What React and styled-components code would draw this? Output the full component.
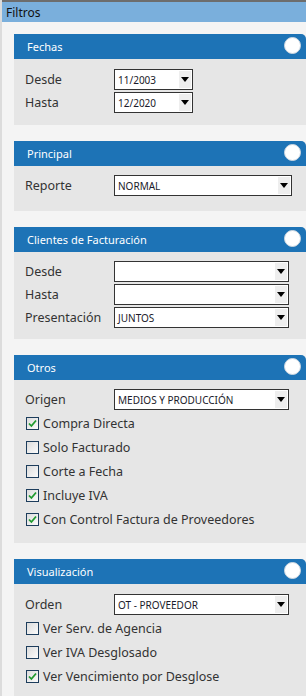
import React from "react";
import styled, { createGlobalStyle } from "styled-components";

const GlobalStyle = createGlobalStyle`
  html, body {
    margin: 0;
    padding: 0;
    background: #f4f4f4;
  }
  body {
    font-family: "Noto Sans", "Open Sans", sans-serif;
    overflow: hidden;
  }
`;

const Page = styled.div`
  width: 306px;
  height: 696px;
  overflow: hidden;
  background: #f4f4f4;
  border-left: 2px solid #dcdcdc;
  box-sizing: border-box;
`;

const TopBar = styled.div`
  height: 20px;
  border-top: 2px solid #6d6d6d;
  background: #7aafdc;
  display: flex;
  align-items: center;
  padding-left: 4px;
  font-family: "Noto Sans", sans-serif;
  font-size: 12px;
  color: #111;
`;

const Content = styled.div`
  display: flex;
  flex-direction: column;
  gap: 16px;
  padding: 12px 0 0 12px;
`;

const Panel = styled.div`
  width: 292px;
  background: #e6e6e6;
  border-top-right-radius: 5px;
`;

const PanelHeader = styled.div`
  height: 25px;
  background: #1d73b6;
  border-top-right-radius: 5px;
  display: flex;
  align-items: center;
  justify-content: space-between;
  padding: 0 5px 0 13px;
  color: #fff;
  font-size: 11px;
`;

const Toggle = styled.span`
  width: 15px;
  height: 15px;
  border-radius: 50%;
  background: #fff;
  border: 1px solid #cfd8e0;
  margin-top: -2px;
`;

const PanelBody = styled.div`
  display: flex;
  flex-direction: column;
  gap: 2px;
  padding: ${p => p.$pad || "10px 0 12px 11px"};
`;

const FieldRow = styled.div`
  display: flex;
  align-items: center;
  height: 21px;
`;

const Label = styled.div`
  width: 89px;
  font-size: 12.5px;
  color: #333;
`;

const Select = styled.div`
  width: ${p => p.$w}px;
  height: 21px;
  box-sizing: border-box;
  border: 1px solid #333;
  background: #fff;
  display: flex;
  align-items: center;
  justify-content: space-between;
  padding: 1px;
`;

const SelectText = styled.span`
  padding-left: 2px;
  font-family: "Noto Sans", sans-serif;
  font-size: 10px;
  color: #1a1a2a;
  white-space: nowrap;
`;

const Arrow = styled.span`
  width: 12px;
  align-self: stretch;
  background: #eeeeee;
  display: flex;
  align-items: center;
  justify-content: center;

  &::after {
    content: "";
    border-left: 4px solid transparent;
    border-right: 4px solid transparent;
    border-top: 5px solid #000;
  }
`;

const CheckRow = styled.label`
  display: flex;
  align-items: center;
  height: 24px;
  margin-top: ${p => (p.$first ? "-1px" : "-2px")};
  padding-left: 1px;
  gap: 4px;
  font-size: 12.5px;
  color: #333;
`;

const Box = styled.span`
  width: 13px;
  height: 13px;
  box-sizing: border-box;
  border: 1px solid #1d3d5c;
  background: linear-gradient(135deg, #dcdcdc, #fbfbfb);
  display: flex;
  align-items: center;
  justify-content: center;
`;

function Check({ on, children, first }) {
  return (
    <CheckRow $first={first}>
      <Box>
        {on && (
          <svg width="9" height="9" viewBox="0 0 9 9">
            <path d="M1 4.5 L3.4 7 L8 1.5" fill="none" stroke="#1f9a2e" strokeWidth="1.8" />
          </svg>
        )}
      </Box>
      {children}
    </CheckRow>
  );
}

function Field({ label, value, w }) {
  return (
    <FieldRow>
      <Label>{label}</Label>
      <Select $w={w}>
        <SelectText>{value}</SelectText>
        <Arrow />
      </Select>
    </FieldRow>
  );
}

function Section({ title, children, pad }) {
  return (
    <Panel>
      <PanelHeader>
        <span>{title}</span>
        <Toggle />
      </PanelHeader>
      <PanelBody $pad={pad}>{children}</PanelBody>
    </Panel>
  );
}

export default function App() {
  return (
    <Page>
      <GlobalStyle />
      <TopBar>Filtros</TopBar>
      <Content>
        <Section title="Fechas">
          <Field label="Desde" value="11/2003" w={79} />
          <Field label="Hasta" value="12/2020" w={79} />
        </Section>

        <Section title="Principal" pad="9px 0 15px 11px">
          <Field label="Reporte" value="NORMAL" w={178} />
        </Section>

        <Section title="Clientes de Facturación" pad="9px 0 11px 11px">
          <Field label="Desde" value="" w={175} />
          <Field label="Hasta" value="" w={175} />
          <Field label="Presentación" value="JUNTOS" w={175} />
        </Section>

        <Section title="Otros" pad="9px 0 12px 11px">
          <Field label="Origen" value="MEDIOS Y PRODUCCIÓN" w={175} />
          <Check on first>Compra Directa</Check>
          <Check>Solo Facturado</Check>
          <Check>Corte a Fecha</Check>
          <Check on>Incluye IVA</Check>
          <Check on>Con Control Factura de Proveedores</Check>
        </Section>

        <Section title="Visualización" pad="10px 0 20px 11px">
          <Field label="Orden" value="OT - PROVEEDOR" w={175} />
          <Check first>Ver Serv. de Agencia</Check>
          <Check>Ver IVA Desglosado</Check>
          <Check on>Ver Vencimiento por Desglose</Check>
        </Section>
      </Content>
    </Page>
  );
}
